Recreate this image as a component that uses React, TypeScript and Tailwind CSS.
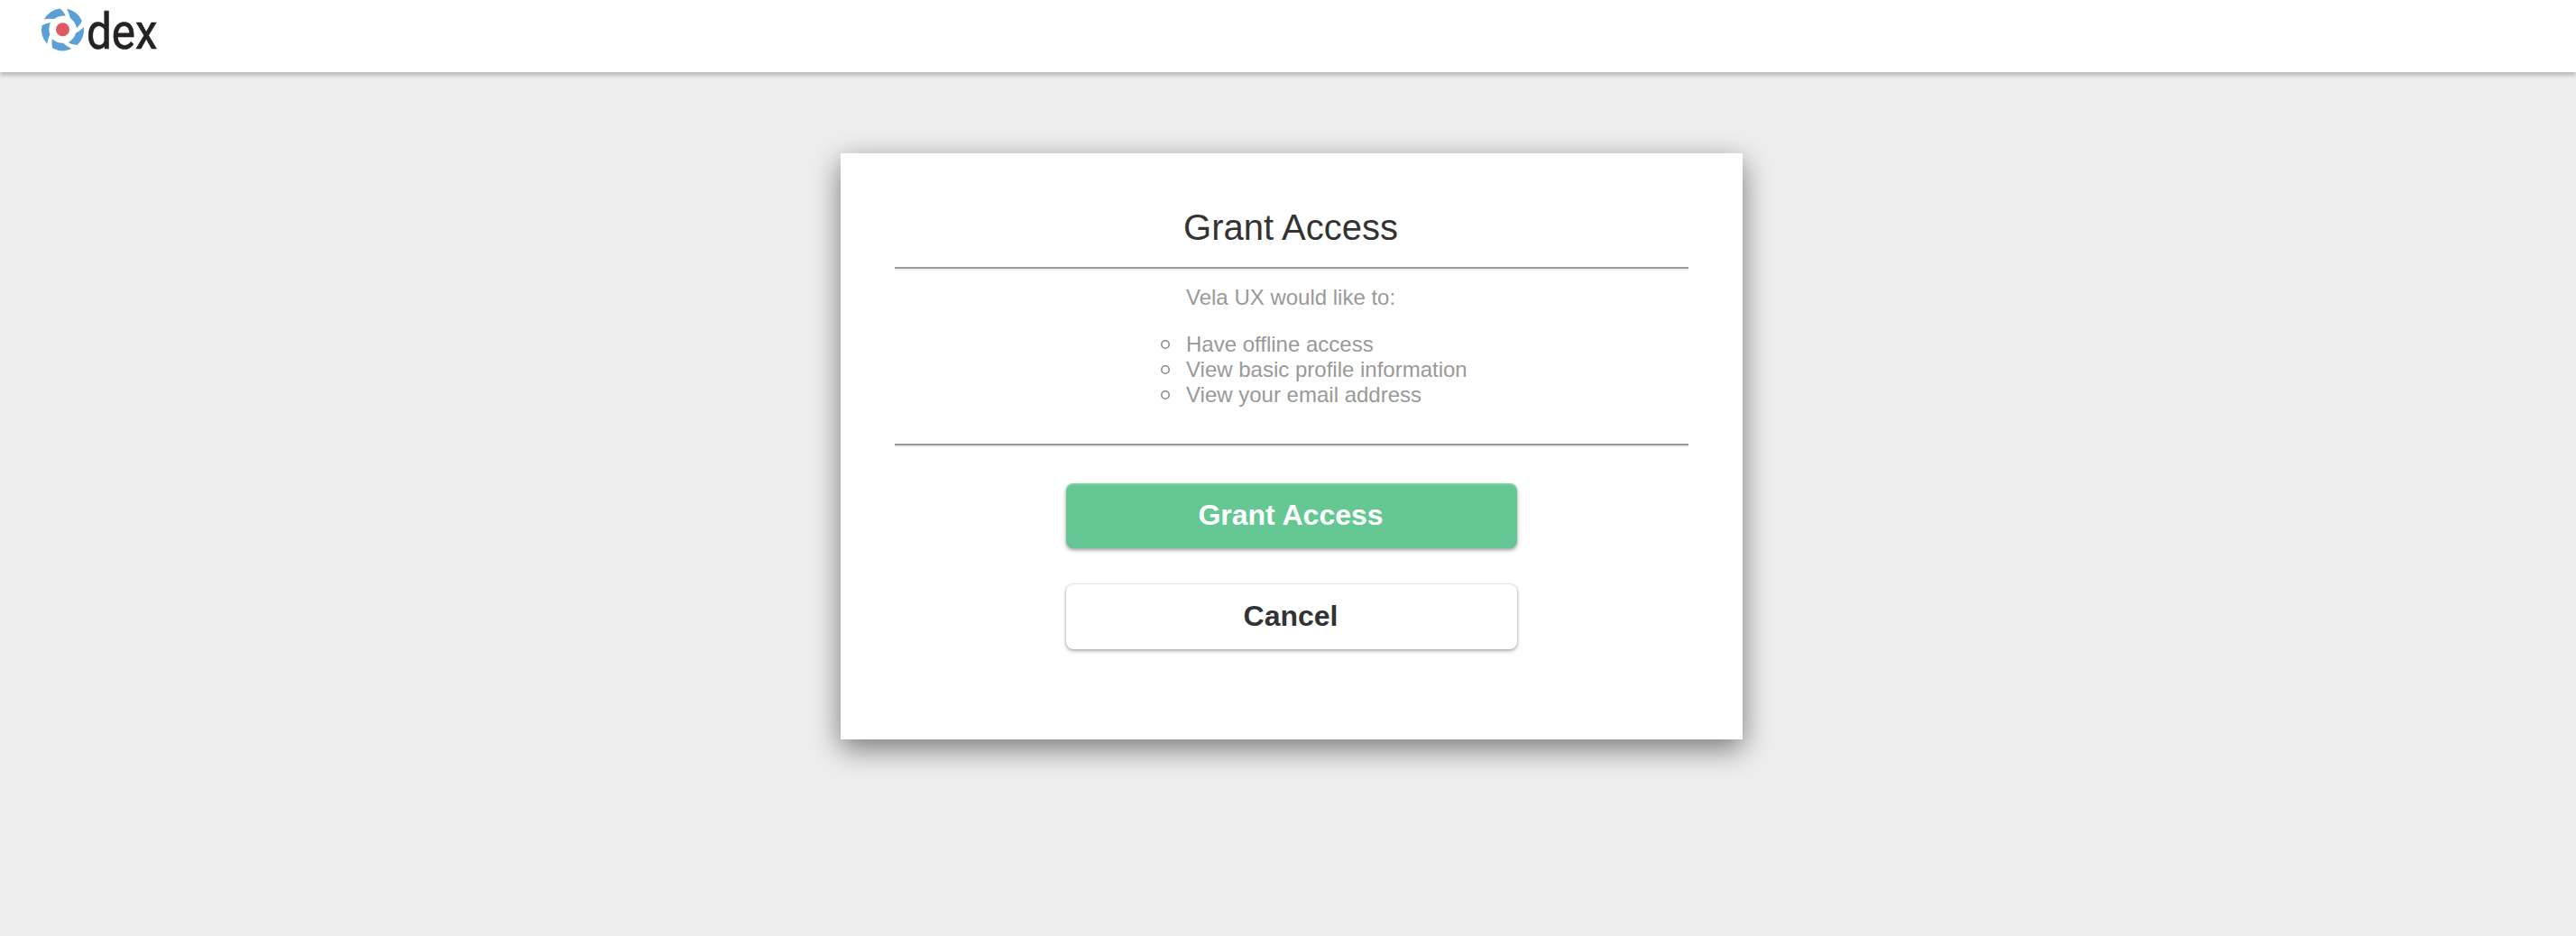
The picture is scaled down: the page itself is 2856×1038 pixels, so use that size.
const scopes = [
  'Have offline access',
  'View basic profile information',
  'View your email address',
];

const petalAngles = [-79, -7, 65, 137, 209];

function Logo() {
  return (
    <svg className="block h-16 w-[140px] overflow-visible" viewBox="0 0 140 64" role="img" aria-label="dex">
      <g transform="translate(29.5 32.8)">
        {petalAngles.map((angle) => (
          <path
            key={angle}
            transform={`rotate(${angle})`}
            fill="#5a9fd6"
            d="M23.500 0 A23.500 23.500 0 0 1 13.800 19 Q9 18.200 4.500 15 Q11.800 11.500 13.800 5.800 Q19 4 23.500 0 Z"
          />
        ))}
        <circle r="7.500" fill="#e05a64" />
      </g>
      <text
        x="56"
        y="53.500"
        fontSize="56"
        textLength="78.500"
        lengthAdjust="spacingAndGlyphs"
        fill="#262223"
        stroke="#262223"
        strokeWidth="0.7"
        fontFamily="Roboto, sans-serif"
      >
        dex
      </text>
    </svg>
  );
}

function Divider() {
  return <hr className="h-1 border-0 border-t-2 border-t-[#9a9a9a] bg-[#eeeeee]" />;
}

export default function App() {
  return (
    <div className="min-h-screen bg-[#eeeeee] font-['Helvetica','Liberation_Sans',sans-serif] text-[#333333]">
      <header className="h-20 bg-white pl-10 shadow-[0_4px_4px_rgba(0,0,0,0.2)]">
        <Logo />
      </header>
      <main className="flex justify-center pt-[90px] pl-2">
        <section className="h-[650px] w-[1000px] bg-white px-[60px] pt-[59px] shadow-[0_10px_30px_rgba(0,0,0,0.5)]">
          <h2 className="mb-[21px] pr-0.5 text-center text-[40px] leading-[46px]">Grant Access</h2>
          <Divider />
          <div className="h-[192px] pt-4 pl-[323px] text-[24px] leading-7 text-[#999999]">
            <p>Vela UX would like to:</p>
            <ul className="mt-6">
              {scopes.map((scope) => (
                <li key={scope} className="flex items-center">
                  <svg className="-ml-[28px] mr-[18px] size-2.5" viewBox="0 0 10 10" aria-hidden="true">
                    <circle cx="5" cy="5" r="4.200" fill="none" stroke="#8c8c8c" strokeWidth="1.600" />
                  </svg>
                  {scope}
                </li>
              ))}
            </ul>
          </div>
          <Divider />
          <div className="flex flex-col items-center gap-10 pt-10">
            <button className="h-[72px] w-[500px] rounded-lg bg-[#65c794] pr-0.5 pb-0.5 text-[32px] font-bold text-white shadow-[0_2px_4px_rgba(0,0,0,0.4),inset_0_2px_0_rgba(255,255,255,0.15)]">
              Grant Access
            </button>
            <button className="h-[72px] w-[500px] rounded-lg bg-white pr-0.5 pb-0.5 text-[32px] font-bold shadow-[0_2px_4px_rgba(0,0,0,0.3),0_0_2px_rgba(0,0,0,0.25)]">
              Cancel
            </button>
          </div>
        </section>
      </main>
    </div>
  );
}
